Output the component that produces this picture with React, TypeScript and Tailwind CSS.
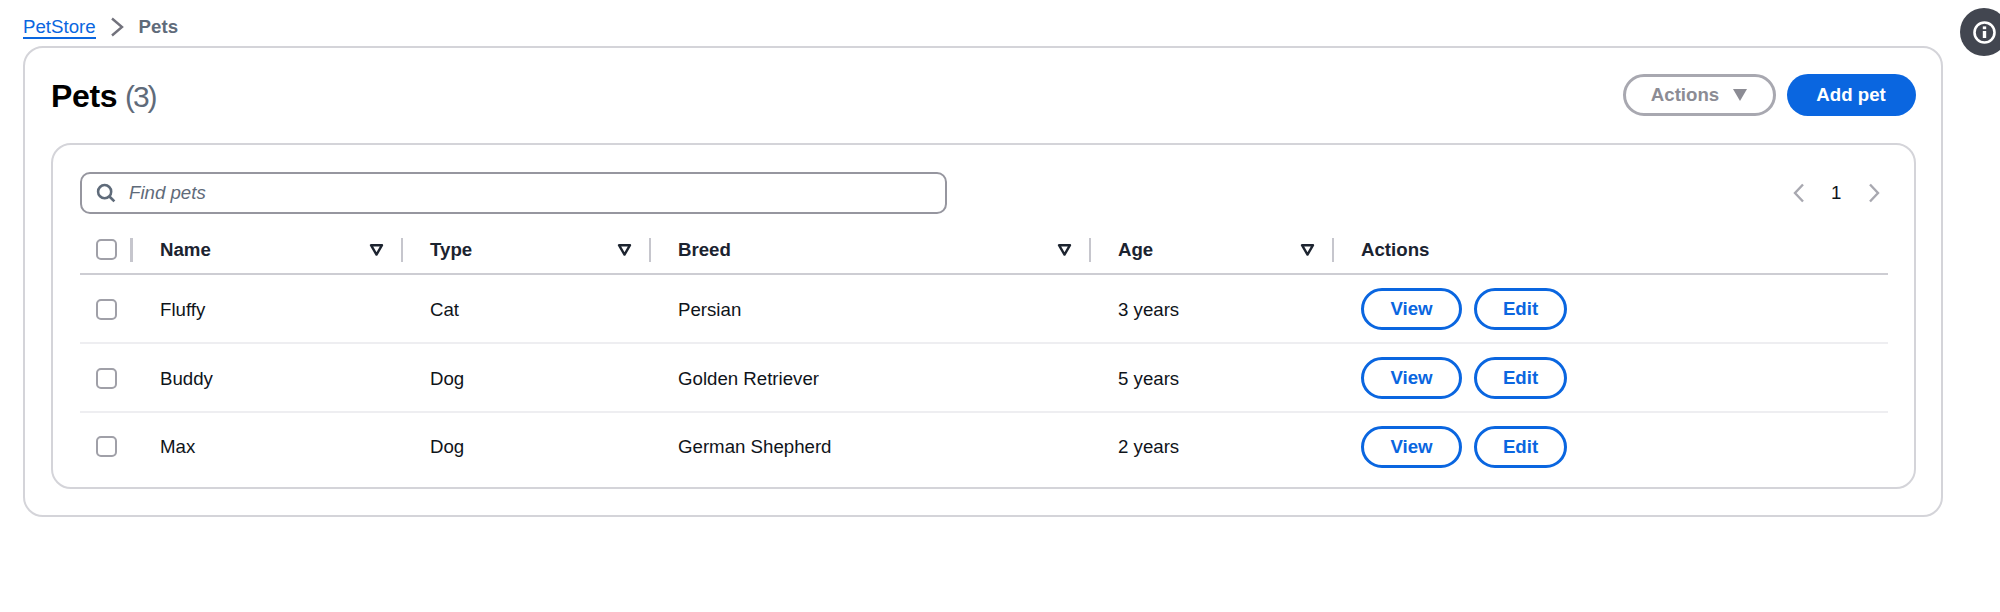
const cols = "grid grid-cols-[53px_270px_248px_440px_243px_1fr]";

const rows = [
  ["Fluffy", "Cat", "Persian", "3 years"],
  ["Buddy", "Dog", "Golden Retriever", "5 years"],
  ["Max", "Dog", "German Shepherd", "2 years"],
];

function Checkbox() {
  return <span className="block w-[21px] h-[21px] rounded-[5px] border-2 border-[#a0a0a8] bg-white" />;
}

function Sort() {
  return (
    <svg width="15" height="14" viewBox="0 0 15 14" className="shrink-0">
      <path d="M2 2.2h11L7.5 11.6z" fill="none" stroke="#1d2430" strokeWidth="2.4" strokeLinejoin="round" />
    </svg>
  );
}

function Head({ label, sep = true }: { label: string; sep?: boolean }) {
  return (
    <div className="flex items-center h-[24px] pl-[27px]">
      <span className="flex-1 text-[18.67px] font-bold text-[#1b2330]">{label}</span>
      {sep && <Sort />}
      {sep && <span className="ml-[17px] w-[2.5px] h-[24px] bg-[#c6c6cd]" />}
    </div>
  );
}

function RowButton({ label, w }: { label: string; w: string }) {
  return (
    <button className={`h-[42px] ${w} rounded-full border-[3px] border-[#0a66e0] text-[18.67px] font-bold text-[#0a66e0] bg-white`}>
      {label}
    </button>
  );
}

export default function App() {
  return (
    <div className="relative w-[2000px] h-[612px] overflow-hidden bg-white font-['Liberation_Sans',Arial,sans-serif] text-[18.67px] text-[#0f141a]">
      <div className="pl-[23px] pr-[57px]">
        <nav className="flex items-center h-[46px] pt-[9px] pb-[1px]">
          <a className="text-[#0a66e0] border-b-2 border-[#0a66e0] leading-[21px]">PetStore</a>
          <svg width="14" height="20" viewBox="0 0 14 20" className="ml-[14px] mr-[15px] -mt-[1px]">
            <path d="M2 1.5 12 10 2 18.5" fill="none" stroke="#72727c" strokeWidth="2.4" />
          </svg>
          <span className="font-bold text-[#5f6b7a]">Pets</span>
        </nav>

        <section className="h-[471px] rounded-[20px] border-2 border-[#d4d4d9] pl-[26px] pr-[25.5px] pt-[26px]">
          <header className="flex items-center justify-between h-[42px]">
            <h1 className="text-[32px] tracking-[-0.32px] font-bold text-black pt-[1px]">
              Pets <span className="-ml-[1px] font-normal text-[30px] tracking-[-2px] text-[#5f6b7a]">(3)</span>
            </h1>
            <div className="flex items-center gap-[11px]">
              <button className="flex items-center justify-center gap-[14px] w-[153px] h-[42px] rounded-full border-[3px] border-[#a8a8b0] bg-white font-bold text-[#8c8c94]">
                Actions
                <svg width="14" height="12" viewBox="0 0 14 12"><path d="M0 0h14L7 12z" fill="#8c8c94" /></svg>
              </button>
              <button className="w-[129px] h-[42px] rounded-full bg-[#0a66e0] font-bold text-white">Add pet</button>
            </div>
          </header>

          <div className="mt-[27px] h-[346px] rounded-[20px] border-2 border-[#d4d4d9] pl-[27px] pr-[26px] pt-[27px]">
            <div className="flex items-center h-[42px]">
              <label className="flex items-center gap-[13px] w-[866.5px] h-[42px] rounded-[10px] border-2 border-[#96969f] pl-[14px]">
                <svg width="20" height="20" viewBox="0 0 22 22" className="shrink-0">
                  <circle cx="9.5" cy="9.5" r="7.2" fill="none" stroke="#5f6b7a" strokeWidth="2.8" />
                  <path d="m14.8 14.8 5.4 5.4" stroke="#5f6b7a" strokeWidth="3" />
                </svg>
                <span className="italic text-[#5f6b7a]">Find pets</span>
              </label>
              <div className="ml-auto flex items-center pr-[7px]">
                <svg width="14" height="22" viewBox="0 0 14 22"><path d="M11 2.5 3 11l8 8.5" fill="none" stroke="#a8a8b0" strokeWidth="2.4" /></svg>
                <span className="w-[60.5px] text-center text-[#0f141a]">1</span>
                <svg width="14" height="22" viewBox="0 0 14 22"><path d="M3 2.5 11 11l-8 8.5" fill="none" stroke="#a8a8b0" strokeWidth="2.4" /></svg>
              </div>
            </div>

            <div className={`${cols} items-center h-[60.5px] pt-[13px] border-b-2 border-[#cdcdd3]`}>
              <div className="flex items-center h-[24px] pl-[16px]">
                <Checkbox />
                <span className="ml-[13px] w-[2.5px] h-[24px] bg-[#c6c6cd]" />
              </div>
              <Head label="Name" />
              <Head label="Type" />
              <Head label="Breed" />
              <Head label="Age" />
              <Head label="Actions" sep={false} />
            </div>

            {rows.map((r, i) => (
              <div
                key={r[0]}
                className={`${cols} items-center pt-[2px] ${i === 0 ? "h-[69.5px]" : "h-[68.5px]"} ${i < 2 ? "border-b-2 border-[#eeeef1]" : "pb-[2px]"}`}
              >
                <div className="pl-[16px]"><Checkbox /></div>
                <div className="pl-[27px] pt-[1px]">{r[0]}</div>
                <div className="pl-[27px] pt-[1px]">{r[1]}</div>
                <div className="pl-[27px] pt-[1px]">{r[2]}</div>
                <div className="pl-[27px] pt-[1px]">{r[3]}</div>
                <div className="pl-[27px] flex gap-[12px]">
                  <RowButton label="View" w="w-[101px]" />
                  <RowButton label="Edit" w="w-[93px]" />
                </div>
              </div>
            ))}
          </div>
        </section>
      </div>

      <div className="absolute left-[1960px] top-[8px] w-[48px] h-[48px] rounded-full bg-[#424650] flex items-center justify-center">
        <svg width="23" height="23" viewBox="0 0 23 23">
          <circle cx="11.5" cy="11.5" r="10" fill="none" stroke="white" strokeWidth="2.6" />
          <path d="M11.5 10v7" stroke="white" strokeWidth="3.4" />
          <path d="M11.5 5.4v2.8" stroke="white" strokeWidth="3.4" />
        </svg>
      </div>
    </div>
  );
}
